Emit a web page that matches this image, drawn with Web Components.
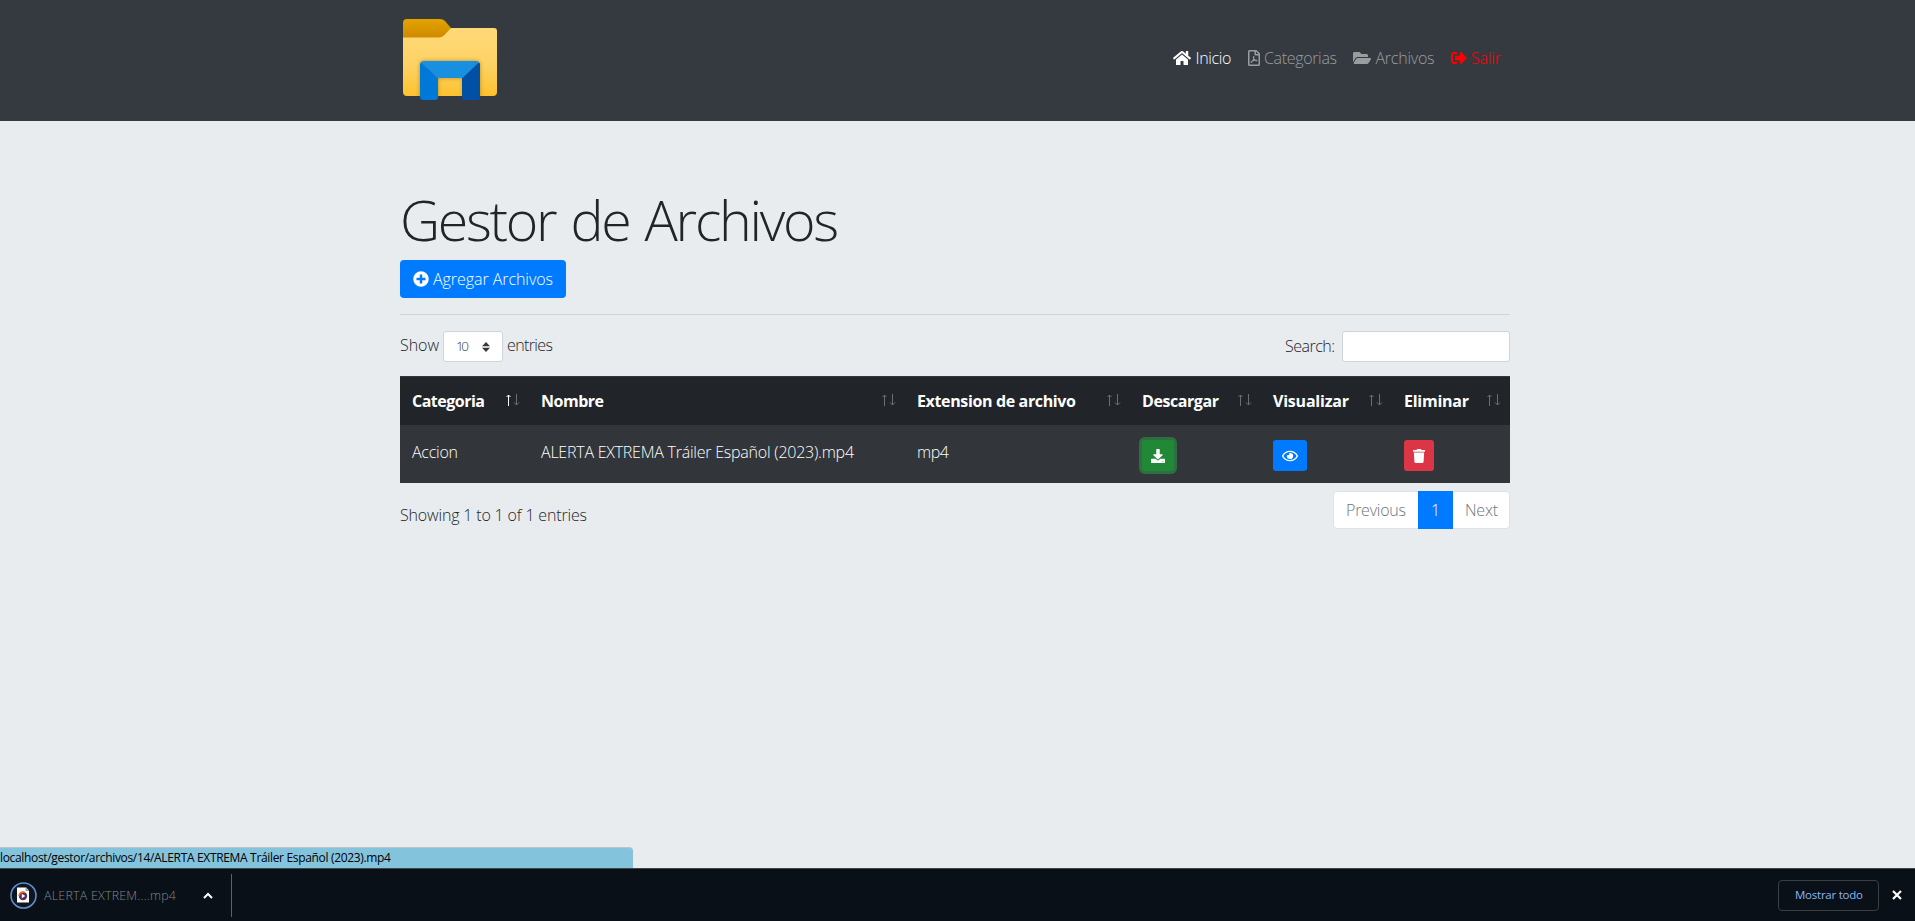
<!DOCTYPE html>
<html lang="es">
<head>
<meta charset="utf-8">
<title>Gestor de Archivos</title>
<style>
html,body{margin:0;height:100%;overflow:hidden}
body{font:350 16px/24px "Open Sans","Noto Sans",sans-serif;color:#212529;background:#e9ecef}
</style>
</head>
<body>
<file-manager></file-manager>
<script>
const define=(name,html,ready)=>customElements.define(name,class extends HTMLElement{
  constructor(){
    super();
    const t=document.createElement('template');
    t.innerHTML=html;
    this.attachShadow({mode:'open'}).append(t.content.cloneNode(true));
  }
  connectedCallback(){ if(ready) ready(this,this.shadowRoot); }
});

/* Text label tracked to a set width */
define('fit-text','<style>:host{display:inline-block;white-space:pre;vertical-align:top}span{display:inline-block}</style><span><slot></slot></span>',(el,root)=>{
  const w=+el.getAttribute('w'), s=root.querySelector('span');
  el.style.width=w+'px';
  const fit=()=>{
    s.style.letterSpacing='0';
    const n=el.textContent.length, d=(w-s.getBoundingClientRect().width)/Math.max(1,n-1);
    s.style.letterSpacing=d.toFixed(3)+'px';
  };
  fit();
  requestAnimationFrame(fit);
});

const icons={
home:['0 0 576 512','<path d="M280.4 148.3 96 300.1V464a16 16 0 0 0 16 16l112-.3a16 16 0 0 0 16-16V368a16 16 0 0 1 16-16h64a16 16 0 0 1 16 16v95.6a16 16 0 0 0 16 16.1L464 480a16 16 0 0 0 16-16V300L295.700 148.300a12.200 12.200 0 0 0-15.300 0zM571.600 251.500 488 182.600V44.100a12 12 0 0 0-12-12h-56a12 12 0 0 0-12 12v72.600L318.500 43a48 48 0 0 0-61 0L4.300 251.500a12 12 0 0 0-1.600 16.900l25.500 31a12 12 0 0 0 16.900 1.600l235.200-193.700a12.200 12.200 0 0 1 15.300 0L530.900 301a12 12 0 0 0 16.900-1.600l25.500-31a12 12 0 0 0-1.700-16.900z"/>'],
pdf:['0 0 384 512','<path d="M369.900 97.900 286 14C277 5 264.800 0 252.100 0H48C21.500 0 0 21.500 0 48v416c0 26.500 21.500 48 48 48h288c26.500 0 48-21.500 48-48V131.900c0-12.700-5.100-25-14.100-34zM332.100 128H256V51.900l76.100 76.100zM48 464V48h160v104c0 13.300 10.700 24 24 24h104v288H48zm250.200-143.700c-12.200-12-47-8.700-64.400-6.500-17.200-10.500-28.700-25-36.800-46.300 3.900-16.100 10.100-40.600 5.400-56-4.200-26.200-37.800-23.600-42.600-5.900-4.400 16.100-.4 38.500 7 67.100-10 23.900-24.900 56-35.400 74.400-20 10.300-47 26.200-51 46.200-3.300 15.800 26 55.200 76.100-31.200 22.400-7.400 46.800-16.500 68.400-20.100 18.900 10.200 41 17 55.800 17 25.500 0 28-28.200 17.500-38.700z"/>'],
folder:['0 0 576 512','<path d="M572.700 292.100 500.300 416.200A64 64 0 0 1 445 448H45c-18.500 0-30.100-20.100-20.700-36.100l72.400-124.100A64 64 0 0 1 152 256h400c18.500 0 30 20.100 20.700 36.100zM152 224h328v-48c0-26.500-21.500-48-48-48H272l-64-64H48C21.500 64 0 85.500 0 112v278l69.100-118.400C86.200 242.200 118 224 152 224z"/>'],
out:['0 0 512 512','<path d="m497 273-168 168c-15 15-41 4.500-41-17v-96H152c-13.300 0-24-10.700-24-24v-96c0-13.300 10.700-24 24-24h136V88c0-21.400 25.900-32 41-17l168 168c9.300 9.400 9.300 24.600 0 34zM192 436v-40c0-6.600-5.400-12-12-12H96c-17.700 0-32-14.300-32-32V160c0-17.700 14.300-32 32-32h84c6.600 0 12-5.400 12-12V76c0-6.600-5.400-12-12-12H96c-53 0-96 43-96 96v192c0 53 43 96 96 96h84c6.600 0 12-5.400 12-12z"/>'],
plus:['0 0 512 512','<path d="M256 8a248 248 0 1 0 0 496 248 248 0 0 0 0-496zm144 276c0 6.600-5.400 12-12 12h-92v92c0 6.600-5.400 12-12 12h-56c-6.600 0-12-5.400-12-12v-92h-92c-6.600 0-12-5.400-12-12v-56c0-6.600 5.400-12 12-12h92v-92c0-6.600 5.400-12 12-12h56c6.600 0 12 5.400 12 12v92h92c6.600 0 12 5.400 12 12z"/>'],
download:['0 0 512 512','<path d="M216 0h80c13.300 0 24 10.700 24 24v168h87.700c17.800 0 26.700 21.500 14.100 34.100L269.700 378.300a19.400 19.400 0 0 1-27.300 0L90.100 226.100c-12.600-12.600-3.700-34.100 14.100-34.100H192V24c0-13.300 10.700-24 24-24zm296 376v112c0 13.300-10.700 24-24 24H24c-13.300 0-24-10.700-24-24V376c0-13.300 10.700-24 24-24h146.700l49 49c20.100 20.100 52.500 20.100 72.600 0l49-49H488c13.300 0 24 10.700 24 24zm-76 68a20 20 0 1 0 0 40 20 20 0 0 0 0-40z"/>'],
eye:['0 0 576 512','<path d="M288 144a110.900 110.900 0 0 0-31.200 5 55.400 55.400 0 0 1 7.200 27 56 56 0 0 1-56 56 55.400 55.400 0 0 1-27-7.200A111.700 111.700 0 1 0 288 144zm284.500 97.400C518.300 135.600 410.900 64 288 64S57.700 135.600 3.500 241.400a32.400 32.400 0 0 0 0 29.200C57.700 376.400 165.100 448 288 448s230.300-71.600 284.500-177.400a32.400 32.400 0 0 0 0-29.200zM288 400c-98.700 0-189.100-55-237.900-144C98.900 167 189.300 112 288 112s189.100 55 237.900 144C477.100 345 386.700 400 288 400z"/>'],
trash:['0 0 448 512','<path d="M432 32H312l-9.400-18.700A24 24 0 0 0 281.100 0H166.800a23.700 23.700 0 0 0-21.400 13.300L136 32H16A16 16 0 0 0 0 48v32a16 16 0 0 0 16 16h416a16 16 0 0 0 16-16V48a16 16 0 0 0-16-16zM53.200 467a48 48 0 0 0 47.900 45h245.800a48 48 0 0 0 47.900-45L416 128H32z"/>'],
sort:['0 0 8 10','<path d="M0 4.200 4 0l4 4.200zM0 5.800h8L4 10z"/>'],
chevron:['0 0 10 7','<path d="M1 6l4-4 4 4" fill="none" stroke="currentColor" stroke-width="2"/>'],
close:['0 0 10 10','<path d="M1 1l8 8M9 1 1 9" fill="none" stroke="currentColor" stroke-width="2.200"/>']
};
define('ui-icon','<style>:host{display:block;flex:none}svg{display:block;width:100%;height:100%;fill:currentColor}</style><svg preserveAspectRatio="none"></svg>',(el,root)=>{
  const [box,path]=icons[el.getAttribute('name')], s=root.querySelector('svg');
  s.setAttribute('viewBox',box); s.innerHTML=path;
  el.style.width=el.getAttribute('w')+'px'; el.style.height=el.getAttribute('h')+'px';
});

define('folder-logo',`<style>:host{display:block;width:94px;height:81px}svg{display:block}</style>
<svg width="94" height="81" viewBox="0 0 94 81">
<defs><linearGradient id="a" x2="0" y2="1"><stop stop-color="#ffd978"/><stop offset=".55" stop-color="#fdd264"/><stop offset="1" stop-color="#fdc22e"/></linearGradient>
<linearGradient id="b" x2="0" y2="1"><stop stop-color="#e3a300"/><stop offset="1" stop-color="#cf8a00"/></linearGradient>
<filter id="s" x="-20%" y="-20%" width="140%" height="140%"><feGaussianBlur stdDeviation="2"/></filter>
<clipPath id="c"><path d="M0 0H94V77H0z"/></clipPath></defs>
<path d="M0 12h40l8-3h43q3 0 3 3v61q0 4-4 4H4q-4 0-4-4z" fill="url(#a)"/>
<path d="M0 18.500V4q0-4 4-4h33q3 0 5 2l6 7-6.500 7q-2.500 2.500-6 2.500z" fill="url(#b)"/>
<g clip-path="url(#c)"><path d="M17 81V46q0-4 4-4h52q4 0 4 4v35H60V59H35v22z" fill="#805c10" opacity=".55" filter="url(#s)"/></g>
<path d="M17 45l1-2 17 16v19q0 3-3 3H20q-3 0-3-3z" fill="#0078d7"/>
<path d="M77 45l-1-2-17 16v19q0 3 3 3h12q3 0 3-3z" fill="#0050a5"/>
<path d="M18 43q1-1 3-1h52q2 0 3 1L59.500 59H34.500z" fill="#1890df"/></svg>`);

define('nav-item',`<style>:host{display:flex;align-items:center;height:24px;color:#9a9da0}:host([active]){color:#fff}:host([exit]){color:#f00}</style><slot></slot>`);
define('nav-bar',`<style>:host{display:block;height:121px;background:#343a40}
.in{width:1107px;padding:19px 2px 0 5px;margin-left:398px;display:flex;justify-content:space-between}
nav{display:flex;padding:27px 9px 0 0}
nav-item:nth-child(n+2){margin-left:16px}fit-text{margin-left:4.500px}</style>
<div class="in"><folder-logo></folder-logo><nav>
<nav-item active><ui-icon name="home" w="18" h="16"></ui-icon><fit-text w="36">Inicio</fit-text></nav-item>
<nav-item><ui-icon name="pdf" w="12" h="16"></ui-icon><fit-text w="73">Categorias</fit-text></nav-item>
<nav-item><ui-icon name="folder" w="18" h="16"></ui-icon><fit-text w="59">Archivos</fit-text></nav-item>
<nav-item exit><ui-icon name="out" w="16" h="16"></ui-icon><fit-text w="30">Salir</fit-text></nav-item>
</nav></div>`);

define('add-button',`<style>:host{display:flex;box-sizing:border-box;width:166px;height:38px;padding:0 13px;align-items:center;border-radius:4px;background:#007bff;color:#fff}fit-text{margin-left:4px}</style><ui-icon name="plus" w="16" h="16"></ui-icon><fit-text w="120">Agregar Archivos</fit-text>`);

define('table-controls',`<style>:host{display:flex;justify-content:space-between;height:31px;line-height:29px}
div{display:flex}.sel,.inp{box-sizing:border-box;height:31px;border:1px solid #ced4da;border-radius:3px;background:#fff}
.sel{width:60px;margin:0 4px;padding:0 12px;display:flex;align-items:center;justify-content:space-between;font-size:13.500px;color:#343a40}
.sel ui-icon{color:#343a40}.inp{width:168px;margin-left:7px}.r{line-height:31px}</style>
<div><fit-text w="39">Show</fit-text><span class="sel"><fit-text w="13">10</fit-text><ui-icon name="sort" w="8" h="10"></ui-icon></span><fit-text w="46">entries</fit-text></div>
<div class="r"><fit-text w="50">Search:</fit-text><span class="inp"></span></div>`);

define('head-cell',`<style>:host{display:flex;box-sizing:border-box;height:48px;padding:12px 9px 0 12px;justify-content:space-between;font-weight:700;color:#fff}
svg{display:block;margin-top:5px;flex:none;fill:none;stroke:#6b6e72}:host([sorted]) .up{stroke:#fff}</style>
<slot></slot><svg width="14" height="12"><path class="up" d="M2.500 12V1M.500 3l2-2 2 2"/><path d="M10.500 0v11M8 8.500l2.500 2.500L13 8.500"/></svg>`);

define('action-button',`<style>:host{display:flex;box-sizing:border-box;height:31px;align-items:center;justify-content:center;border-radius:3px;color:#fff;background:#007bff;width:34px}
:host([kind=save]){background:#218838;width:32px;box-shadow:0 0 0 3px #2d6f40}:host([kind=del]){background:#dc3545;width:30px}</style><slot></slot>`);

define('file-table',`<style>:host{display:block;box-sizing:border-box;height:107px;background:#32353a;border-top:1px solid #32383e;color:#fff}
.row{display:grid;grid-template-columns:129px 376px 225px 131px 131px 118px}.head{background:#212529}
.body{height:58px;border-top:1px solid #32383e;box-sizing:border-box}.body>*{margin:14px 0 0 12px}</style>
<div class="row head">
<head-cell sorted><fit-text w="73">Categoria</fit-text></head-cell><head-cell><fit-text w="63">Nombre</fit-text></head-cell>
<head-cell><fit-text w="159">Extension de archivo</fit-text></head-cell><head-cell><fit-text w="77">Descargar</fit-text></head-cell>
<head-cell><fit-text w="76">Visualizar</fit-text></head-cell><head-cell><fit-text w="65">Eliminar</fit-text></head-cell></div>
<div class="row body"><fit-text w="46">Accion</fit-text><fit-text w="313">ALERTA EXTREMA Tráiler Español (2023).mp4</fit-text><fit-text w="32">mp4</fit-text>
<action-button kind="save"><ui-icon name="download" w="14" h="14"></ui-icon></action-button>
<action-button><ui-icon name="eye" w="16" h="14"></ui-icon></action-button>
<action-button kind="del"><ui-icon name="trash" w="12" h="14"></ui-icon></action-button></div>`);

define('table-footer',`<style>:host{display:flex;justify-content:space-between;margin-top:8px}.info{padding-top:12px}
.pg{display:flex;box-sizing:border-box;width:177px;height:38px;line-height:36px;border:1px solid #dee2e6;border-radius:4px;background:#fff;color:#6c757d}
.p{width:84px;box-sizing:border-box;padding-left:12px}.c{width:35px;height:38px;margin-top:-1px;line-height:38px;text-align:center;background:#007bff;color:#fff}.n{padding-left:12px}</style>
<fit-text class="info" w="187">Showing 1 to 1 of 1 entries</fit-text>
<div class="pg"><div class="p"><fit-text w="60">Previous</fit-text></div><div class="c">1</div><div class="n"><fit-text w="33">Next</fit-text></div></div>`);

define('page-content',`<style>:host{display:block;flex:1;width:1110px;padding:66px 0 0 400px}
h1{margin:0 0 7px;font-size:55.500px;font-weight:320;line-height:66px;word-spacing:3px}hr{border:0;height:1px;background:#d0d4d8;margin:16px 0}file-table{margin-top:14px}</style>
<h1><fit-text w="439">Gestor de Archivos</fit-text></h1><add-button></add-button><hr><table-controls></table-controls><file-table></file-table><table-footer></table-footer>`);

define('status-bubble',`<style>:host{display:block;box-sizing:border-box;width:633px;height:21px;background:#84c3dc;border-top:1px solid #b9c5cb;border-top-right-radius:4px;color:#000;font-size:12px;font-weight:400;line-height:19px}</style><fit-text w="391">localhost/gestor/archivos/14/ALERTA EXTREMA Tráiler Español (2023).mp4</fit-text>`);

define('download-shelf',`<style>:host{display:flex;box-sizing:border-box;height:53px;background:#091017;border-top:1px solid #3d4648;font-size:12.500px;color:#80868b;align-items:center;padding:0 13px 0 10px}
.name{margin:1px 27px 0 7px}.bar{width:1px;height:43px;margin-left:18px;background:#5c6266}
.all{margin-left:auto;box-sizing:border-box;width:101px;height:31px;line-height:25px;padding:1px 0 0 16px;border:1px solid #3c4043;border-radius:4px;color:#8ab4f8;font-size:11.500px;font-weight:400}
ui-icon{color:#fff}.x{margin-left:13px}</style>
<svg width="27" height="27"><circle cx="13.500" cy="13.500" r="12.500" fill="#0c1722" stroke="#668cc8" stroke-width="1.600"/><path d="M7 5.500h9l3 3v12H7z" fill="#fff"/><path d="M16 5.500v3h3" fill="#bbb" stroke="#777" stroke-width=".7"/><circle cx="13" cy="14" r="4.200" fill="#583060"/><path d="M9 14a4 4 0 0 1 6-3.500" fill="none" stroke="#f06a20" stroke-width="1.500"/><path d="M11.800 11.800v4.400l3.500-2.200z" fill="#fff"/></svg>
<fit-text class="name" w="132">ALERTA EXTREM....mp4</fit-text><ui-icon name="chevron" w="10" h="7"></ui-icon><div class="bar"></div>
<div class="all"><fit-text w="68">Mostrar todo</fit-text></div><ui-icon class="x" name="close" w="10" h="10"></ui-icon>`);

define('file-manager',`<style>:host{display:flex;flex-direction:column;height:921px}</style><nav-bar></nav-bar><page-content></page-content><status-bubble></status-bubble><download-shelf></download-shelf>`);
</script>
</body>
</html>
